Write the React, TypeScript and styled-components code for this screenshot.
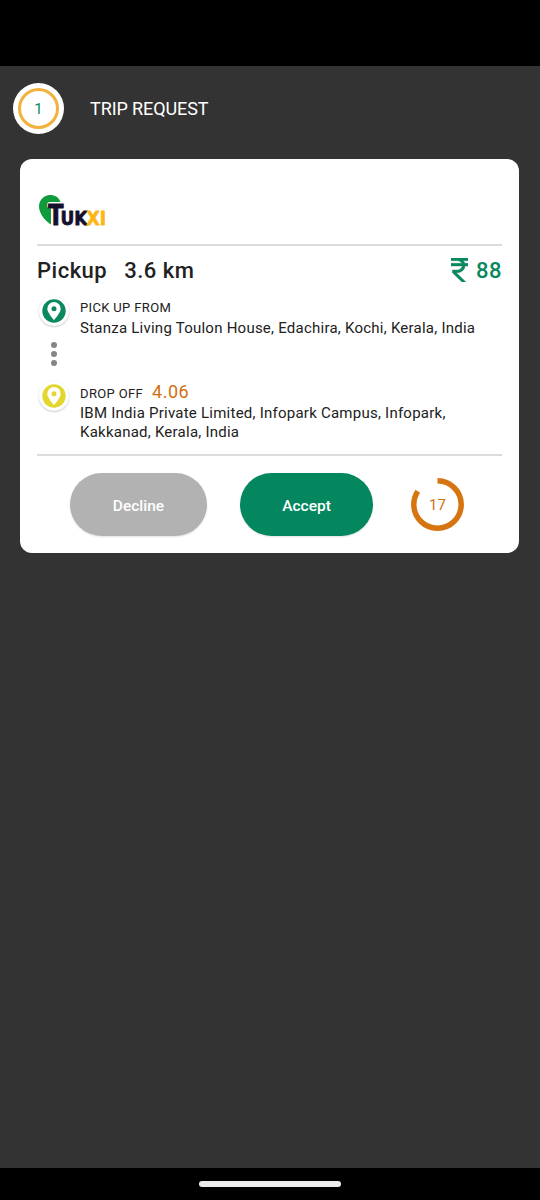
import React from "react";
import styled, { createGlobalStyle } from "styled-components";

const GlobalStyle = createGlobalStyle`
  * { box-sizing: border-box; }
  body { margin: 0; background: #333333; font-family: Roboto, "Liberation Sans", sans-serif; }
`;

const Screen = styled.div`
  display: flex;
  flex-direction: column;
  width: 540px;
  height: 1200px;
  background: #333333;
`;

const StatusBar = styled.div`
  flex: none;
  height: 66px;
  background: #000;
`;

const Header = styled.header`
  display: flex;
  align-items: center;
  gap: 26px;
  height: 93px;
  padding: 0 13px 9px;
`;

const CountBadge = styled.div`
  display: grid;
  place-items: center;
  width: 51px;
  height: 51px;
  border-radius: 50%;
  background: #fff;
`;

const CountRing = styled.div`
  display: grid;
  place-items: center;
  width: 41px;
  height: 41px;
  padding-top: 1px;
  border: 3px solid #f2b13c;
  border-radius: 50%;
  color: #0a8860;
  font-size: 15px;
  line-height: 18px;
`;

const Title = styled.h1`
  margin: 0;
  padding-top: 2px;
  color: #fff;
  font-size: 18px;
  line-height: 22px;
  font-weight: 400;
  letter-spacing: -0.1px;
`;

const Card = styled.main`
  display: flex;
  flex-direction: column;
  width: 499px;
  height: 394px;
  margin-left: 20px;
  padding: 35px 17px 0;
  border-radius: 12px;
  background: #fff;
  color: #212121;
`;

const Logo = styled.svg`
  display: block;
  flex: none;
  width: 70px;
  height: 50px;
`;

const Divider = styled.div`
  flex: none;
  height: 2px;
  background: #dcdcdc;
`;

const Summary = styled.div`
  display: flex;
  align-items: center;
  height: 50px;
  font-size: 22px;
  line-height: 26px;
  font-weight: 500;
  letter-spacing: 0.5px;
`;

const Distance = styled.span`
  margin-left: 17px;
`;

const Fare = styled.span`
  display: flex;
  align-items: center;
  gap: 8px;
  margin-left: auto;
  color: #0a8860;
`;

const Rupee = styled.svg`
  width: 17px;
  height: 24px;
  margin-top: -2px;
`;

const Stop = styled.section`
  display: flex;
  gap: 10px;
  height: 43px;
  padding-left: 2px;
`;

const PinDisc = styled.div`
  display: grid;
  flex: none;
  place-items: center;
  width: 30px;
  height: 30px;
  border-radius: 50%;
  background: #fff;
  box-shadow: 0 1px 2px rgba(60, 60, 80, 0.28);
`;

const StopText = styled.div`
  padding: 1px 0 0 1px;
`;

const StopLabel = styled.div<{ $raised?: boolean }>`
  display: flex;
  align-items: baseline;
  gap: 9px;
  height: 22px;
  margin-top: ${(p) => (p.$raised ? -1 : 0)}px;
  margin-bottom: ${(p) => (p.$raised ? 1 : 0)}px;
  font-size: 13px;
  line-height: ${(p) => (p.$raised ? 21 : 22)}px;
  letter-spacing: 0.35px;
`;

const DropDistance = styled.span`
  color: #d2700f;
  font-size: 18px;
  letter-spacing: 0.5px;
`;

const Address = styled.div`
  font-size: 15px;
  line-height: 19px;
  letter-spacing: 0.24px;
  white-space: nowrap;
`;

const Connector = styled.div`
  display: flex;
  flex-direction: column;
  gap: 3px;
  height: 42px;
  padding: 3px 0 0 14px;
`;

const Dot = styled.span`
  width: 6px;
  height: 6px;
  border-radius: 50%;
  background: #858585;
`;

const BottomDivider = styled(Divider)`
  margin-top: 30px;
`;

const Actions = styled.div`
  display: flex;
  align-items: center;
  padding: 17px 0 0 33px;
`;

const ActionButton = styled.button<{ $tone: string; $width: number }>`
  width: ${(p) => p.$width}px;
  height: 63px;
  padding: 2px 0 0;
  border: 0;
  border-radius: 32px;
  background: ${(p) => p.$tone};
  box-shadow: 0 1px 2px rgba(0, 0, 0, 0.12);
  color: #fff;
  font: 500 15.5px/20px Roboto, sans-serif;
  & + & { margin-left: 33px; }
`;

const Timer = styled.div`
  display: grid;
  place-items: center;
  width: 53px;
  height: 53px;
  margin-left: 38px;
  color: #d2700f;
  font-size: 15px;
  > * { grid-area: 1 / 1; }
`;

const Spacer = styled.div`
  flex: 1;
`;

const NavBar = styled.footer`
  display: flex;
  justify-content: center;
  flex: none;
  height: 32px;
  padding-top: 13px;
  background: #000;
`;

const HomeHandle = styled.div`
  width: 142px;
  height: 6px;
  border-radius: 3px;
  background: #ececec;
`;

function Pin({ color }: { color: string }) {
  return (
    <PinDisc>
      <svg width="24" height="24" viewBox="0 0 24 24">
        <circle cx="12" cy="12" r="11.7" fill={color} />
        <path
          fill="#fff"
          fillRule="evenodd"
          d="M12 3a6.700 6.700 0 0 0-6.700 6.700c0 4 6.700 11.300 6.700 11.300s6.700-7.300 6.700-11.300a6.700 6.700 0 0 0-6.700-6.700zm0 4.200a2.500 2.500 0 1 1 0 5 2.500 2.500 0 0 1 0-5z"
        />
      </svg>
    </PinDisc>
  );
}

export default function App() {
  return (
    <>
      <GlobalStyle />
      <Screen>
        <StatusBar />
        <Header>
          <CountBadge>
            <CountRing>1</CountRing>
          </CountBadge>
          <Title>TRIP REQUEST</Title>
        </Header>
        <Card>
          <Logo viewBox="0 0 70 50">
            <path
              fill="#0d9b3c"
              d="M14 30.500C9 27.500 2 20 2 12.500A11.300 11.300 0 0 1 13 1C18 1 22 3.500 23.500 8H13Q10 8 10 11.200T13 14.500H14z"
            />
            <g fontFamily='"DejaVu Sans", sans-serif' fontWeight="700" strokeWidth="0.800" strokeLinejoin="round">
              <text x="11" y="30.600" fontSize="28" textLength="15.500" lengthAdjust="spacingAndGlyphs" fill="#15102b" stroke="#15102b">
                T
              </text>
              <text x="23.500" y="30.600" fontSize="20" textLength="27" lengthAdjust="spacingAndGlyphs" fill="#15102b" stroke="#15102b">
                UK
              </text>
              <text x="49.500" y="30.600" fontSize="20" textLength="19.500" lengthAdjust="spacingAndGlyphs" fill="#fcb714" stroke="#fcb714">
                XI
              </text>
            </g>
          </Logo>
          <Divider />
          <Summary>
            <span>Pickup</span>
            <Distance>3.6 km</Distance>
            <Fare>
              <Rupee
                viewBox="6 3 12 18"
                preserveAspectRatio="none"
                fill="currentColor"
                stroke="currentColor"
                strokeWidth="0.300"
              >
                <path d="M13.66 7C13.1 5.82 11.9 5 10.5 5H6V3h12v2h-3.26c.48.58.84 1.26 1.05 2H18v2h-2.02A5.49 5.49 0 0 1 10.5 14h-.73l6.730 7h-2.770L7 14v-2h3.500c1.760 0 3.220-1.300 3.460-3H6V7h7.660z" />
              </Rupee>
              <span>88</span>
            </Fare>
          </Summary>
          <Stop>
            <Pin color="#0a8860" />
            <StopText>
              <StopLabel>PICK UP FROM</StopLabel>
              <Address>Stanza Living Toulon House, Edachira, Kochi, Kerala, India</Address>
            </StopText>
          </Stop>
          <Connector>
            <Dot />
            <Dot />
            <Dot />
          </Connector>
          <Stop>
            <Pin color="#e3d62f" />
            <StopText>
              <StopLabel $raised>
                DROP OFF <DropDistance>4.06</DropDistance>
              </StopLabel>
              <Address>
                IBM India Private Limited, Infopark Campus, Infopark,
                <br />
                Kakkanad, Kerala, India
              </Address>
            </StopText>
          </Stop>
          <BottomDivider />
          <Actions>
            <ActionButton $tone="#b2b2b2" $width={137}>Decline</ActionButton>
            <ActionButton $tone="#04875f" $width={133}>Accept</ActionButton>
            <Timer>
              <svg width="53" height="53" viewBox="0 0 53 53">
                <circle cx="26.5" cy="26.5" r="23.7" fill="none" stroke="#d6740f" strokeWidth="5.500" pathLength="360" strokeDasharray="304 56" transform="rotate(-90 26.5 26.5)" />
              </svg>
              <span>17</span>
            </Timer>
          </Actions>
        </Card>
        <Spacer />
        <NavBar>
          <HomeHandle />
        </NavBar>
      </Screen>
    </>
  );
}
